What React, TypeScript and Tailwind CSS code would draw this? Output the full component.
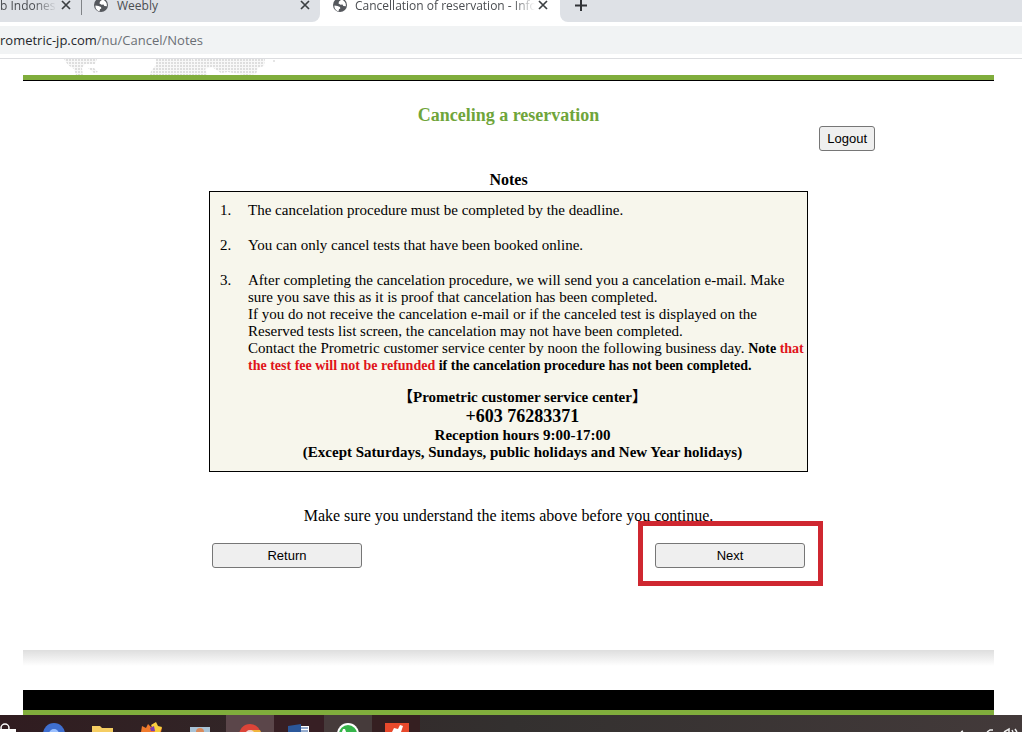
import React from 'react';

const GlobeIcon: React.FC = () => (
  <svg viewBox="0 0 16 16" className="w-4 h-4 shrink-0" aria-hidden="true">
    <circle cx="8" cy="8" r="7" fill="#55585d" />
    <path d="M2.500 8.500 5.500 9l2.500 1 .3 1.400-1.300.8-.5 2C4 13.500 2 11.500 2.500 8.500zM9.500 2.500 7 4.500l-.5 2 2 1.200 2-.2.800 1.500 2.500.2c.5-3-1.200-5.700-4.300-6.700z" fill="#fff" />
  </svg>
);

const CloseIcon: React.FC = () => (
  <svg viewBox="0 0 10 10" className="w-[10px] h-[10px]" aria-hidden="true">
    <path d="M1 1l8 8M9 1l-8 8" stroke="#3c4043" strokeWidth="1.700" />
  </svg>
);

const WorldMap: React.FC = () => (
  <svg viewBox="0 0 220 16" className="w-[220px] h-4 ml-[37px]" aria-hidden="true">
    <defs>
      <pattern id="dots" width="3" height="3" patternUnits="userSpaceOnUse">
        <rect width="3" height="3" fill="#f8f8f8" />
        <rect width="2" height="2" fill="#dedede" />
      </pattern>
    </defs>
    <path d="M4 0h33l-2 5-10 0-3 4 1 7h-7l-2-6-6-4zM28 9l6 0 4 4-4 1zM96 0h37l2 4 6 3 5 4 1 5H90l1-4 5-6zM134 0h71l-1 7-6 2-2 6-10 1-8-1-10-2-7 1-9-6-8 2-8-3z" fill="url(#dots)" />
    <circle cx="214" cy="2" r="1" fill="#dcdcdc" />
  </svg>
);

const notes = [
  'The cancelation procedure must be completed by the deadline.',
  'You can only cancel tests that have been booked online.',
];

const buttonStyle = 'h-[25px] border border-[#767676] rounded-[3px] bg-[#efefef] text-black text-[13px] leading-4';
const closeButton = 'flex items-center justify-center w-[10px] h-[10px] shrink-0';

const TabStrip: React.FC = () => (
  <header className="shrink-0 font-['Open_Sans',sans-serif]">
    {/* Tabs */}
    <div className="flex h-[22px] text-xs leading-3 text-[#4a4d51]">
      <div className="flex items-start w-[320px] bg-[#dee1e6] rounded-br-lg">
        <div className="flex w-[82px] h-[15px] pr-[10px] border-r border-[#808387]">
          <span className="flex-1 mr-1 overflow-hidden whitespace-nowrap [mask-image:linear-gradient(to_right,black_60%,transparent)]">b Indones</span>
          <button type="button" aria-label="Close tab" className={closeButton}><CloseIcon /></button>
        </div>
        <div className="flex flex-1 pl-[11px] pr-[10px]">
          <div className="-mt-[3px]"><GlobeIcon /></div>
          <span className="flex-1 pl-2">Weebly</span>
          <button type="button" aria-label="Close tab" className={closeButton}><CloseIcon /></button>
        </div>
      </div>
      <div className="flex items-start w-[240px] pl-3 bg-white">
        <div className="-mt-[3px]"><GlobeIcon /></div>
        <span className="w-[180px] ml-[7px] mr-[3px] overflow-hidden whitespace-nowrap [mask-image:linear-gradient(to_right,black_88%,transparent)]">
          Cancellation of reservation - Info
        </span>
        <button type="button" aria-label="Close tab" className={closeButton}><CloseIcon /></button>
      </div>
      <div className="flex-1 pl-[15px] bg-[#dee1e6] rounded-bl-lg">
        <button type="button" aria-label="New tab" className="block">
          <svg viewBox="0 0 12 12" className="w-3 h-3" aria-hidden="true">
            <path d="M6 0v11M0 5.500h12" stroke="#303236" strokeWidth="2" />
          </svg>
        </button>
      </div>
    </div>
    {/* Address bar */}
    <div className="py-1 border-b border-[#dcdde0] bg-white">
      <div className="h-7 bg-[#f1f3f4] text-[13px] leading-7 text-[#6b6f74]">
        <span className="text-[#25282c]">rometric-jp.com</span>/nu/Cancel/Notes
      </div>
    </div>
  </header>
);

const Taskbar: React.FC = () => (
  <footer className="flex shrink-0 h-[17px] overflow-hidden bg-linear-to-r from-[#301c20] via-[#33302f] to-[#433a3a]">
    <div className="w-[226px]">
      <svg viewBox="0 0 226 17" className="w-[226px] h-[17px]" aria-hidden="true">
        <path d="M0 14h16v3H0z" fill="#fff" />
        <circle cx="5" cy="13" r="4" fill="none" stroke="#fff" strokeWidth="1.500" />
        <circle cx="54" cy="19" r="11" fill="#3f6fd0" />
        <circle cx="54" cy="19" r="5" fill="#9bc0ff" />
        <path d="M92 11h8l2 2h11v4H92z" fill="#f5cd62" />
        <path d="M141 17l1-6 4 2 2-4 3 3 4-4 2 4 5 1-1 4z" fill="#f07a2c" />
        <path d="M151 10l5-3 2 4 4 1-2 5h-5z" fill="#f9cf3f" />
        <path d="M150 13l4-2 1 5h-4z" fill="#7a3fb0" />
        <path d="M190 12h20v5h-20z" fill="#a9c3d6" />
        <circle cx="200" cy="17" r="4" fill="#d98a5b" />
      </svg>
    </div>
    <div className="w-12 bg-[#5b464a]">
      <svg viewBox="0 0 48 17" className="w-12 h-[17px]" aria-hidden="true">
        <circle cx="24" cy="20" r="11" fill="#dc4438" />
        <path d="M24 15h10l1 2H24z" fill="#f0b53c" />
        <circle cx="24" cy="20" r="5" fill="#f3d5d0" />
      </svg>
    </div>
    <div className="w-[50px] bg-[#371f24]">
      <svg viewBox="0 0 50 17" className="w-[50px] h-[17px]" aria-hidden="true">
        <path d="M24 11h11v6H24z" fill="#fff" />
        <path d="M14 11l13-2v8H14z" fill="#2b579a" />
        <path d="M27 13h7M27 16h7" stroke="#2b579a" />
      </svg>
    </div>
    <div className="w-12 bg-[#463b3b]">
      <svg viewBox="0 0 48 17" className="w-12 h-[17px]" aria-hidden="true">
        <circle cx="24" cy="19" r="11" fill="#fff" />
        <circle cx="24" cy="19" r="9" fill="#36b54a" />
        <path d="M19 14l2 0 1 3h-4z" fill="#fff" />
      </svg>
    </div>
    <div className="w-12 bg-[#351f21]">
      <svg viewBox="0 0 48 17" className="w-12 h-[17px]" aria-hidden="true">
        <path d="M13 8h24v9H13z" fill="#e8492c" />
        <path d="M20 17l2-4 4 1 2-4 3 1-2 6z" fill="#fff" />
      </svg>
    </div>
    <div className="flex flex-1 justify-end">
      <svg viewBox="0 0 64 17" className="w-16 h-[17px]" aria-hidden="true">
        <path d="M3 17l2-1M29 17l3-2h3M46 17l5-3v3M54 15l1 2M57 14l2 3" fill="none" stroke="#eee" strokeWidth="1.500" />
      </svg>
    </div>
  </footer>
);

const App: React.FC = () => {
  return (
    <div className="flex flex-col h-screen overflow-hidden bg-white text-black">
      <TabStrip />

      <main className="flex-1 min-h-0 overflow-hidden pl-[23px] pr-7 font-['Liberation_Serif','Noto_Sans_CJK_JP',serif]">
        <div className="h-4"><WorldMap /></div>
        <div className="h-[6px] bg-[#80ad3c] border-b border-black" />

        {/* Page content */}
        <div className="max-w-[733px] mx-auto pt-6">
          <h1 className="text-lg leading-[21px] font-bold text-center text-[#6fa53a]">Canceling a reservation</h1>
          <div className="flex justify-end">
            <button type="button" className={`${buttonStyle} px-[7px] font-['Liberation_Sans',sans-serif]`}>Logout</button>
          </div>

          <section className="max-w-[599px] mx-auto pt-[18px] text-base leading-5">
            <h2 className="pb-px leading-[21px] font-bold text-center">Notes</h2>
            <div className="p-[10px] border border-black bg-[#f7f6ec] text-[15px] leading-[17px]">
              <ol className="space-y-[18px]">
                {notes.map((note, i) => (
                  <li key={note} className="flex">
                    <span className="w-7 shrink-0">{i + 1}.</span>
                    <span>{note}</span>
                  </li>
                ))}
                <li className="flex">
                  <span className="w-7 shrink-0">3.</span>
                  <p className="whitespace-nowrap">
                    After completing the cancelation procedure, we will send you a cancelation e-mail. Make<br />
                    sure you save this as it is proof that cancelation has been completed.<br />
                    If you do not receive the cancelation e-mail or if the canceled test is displayed on the<br />
                    Reserved tests list screen, the cancelation may not have been completed.<br />
                    Contact the Prometric customer service center by noon the following business day.{' '}
                    <b className="text-sm leading-[17px]">
                      Note <span className="text-[#e0141a]">that<br />the test fee will not be refunded</span> if the cancelation procedure has not been completed.
                    </b>
                  </p>
                </li>
              </ol>
              <div className="pt-[15px] pl-7 font-bold text-center">
                <p>【Prometric customer service center】</p>
                <p className="text-lg leading-[21px]">+603 76283371</p>
                <p>Reception hours 9:00-17:00</p>
                <p>(Except Saturdays, Sundays, public holidays and New Year holidays)</p>
              </div>
            </div>

            <p className="pt-[34px] text-center">Make sure you understand the items above before you continue.</p>
            <div className="flex justify-between px-[3px] pt-[17px] font-['Liberation_Sans',sans-serif]">
              <button type="button" className={`${buttonStyle} w-[150px]`}>Return</button>
              <div className="relative flex">
                <button type="button" className={`${buttonStyle} w-[150px]`}>Next</button>
                <div className="absolute -left-[17px] -right-[18px] -top-[22px] -bottom-[18px] border-[5px] border-[#cf2730] pointer-events-none" />
              </div>
            </div>
          </section>
        </div>

        {/* Page footer */}
        <div className="h-4 mt-[82px] bg-linear-to-b from-[#dedede] to-white" />
        <div className="h-[25px] mt-6 bg-black border-b-[5px] border-[#80ad3c]" />
      </main>

      <Taskbar />
    </div>
  );
};

export default App;
